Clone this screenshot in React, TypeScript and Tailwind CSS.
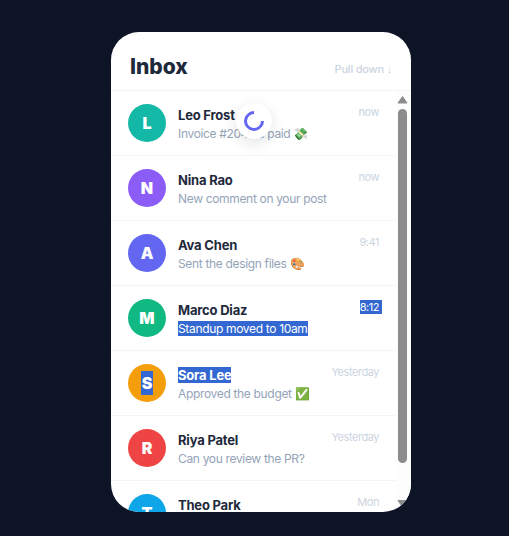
import React from 'react';

const Sel = ({ children, className = '' }: { children: React.ReactNode; className?: string }) => (
  <span className={`bg-[#3367d1] text-white ${className}`}>{children}</span>
);

const rows = [
  { letter: 'L', color: 'bg-[#14b8a6]', name: 'Leo Frost', sub: 'Invoice #2041 is paid 💸', time: 'now' },
  { letter: 'N', color: 'bg-[#8b5cf6]', name: 'Nina Rao', sub: 'New comment on your post', time: 'now' },
  { letter: 'A', color: 'bg-[#6366f1]', name: 'Ava Chen', sub: 'Sent the design files 🎨', time: '9:41' },
  { letter: 'M', color: 'bg-[#10b981]', name: 'Marco Diaz', sub: <Sel>Standup moved to 10am</Sel>, time: <Sel className="pr-[3px] -mr-[3px]">8:12</Sel> },
  { letter: <Sel className="px-[1px]">S</Sel>, color: 'bg-[#f59e0b]', name: <Sel>Sora Lee</Sel>, sub: 'Approved the budget ✅', time: 'Yesterday' },
  { letter: 'R', color: 'bg-[#ef4444]', name: 'Riya Patel', sub: 'Can you review the PR?', time: 'Yesterday' },
  { letter: 'T', color: 'bg-[#0ea5e9]', name: 'Theo Park', sub: 'Lunch on Friday?', time: 'Mon' },
];

export default function App() {
  return (
    <div className="min-h-[536px] bg-[#0c1426] pl-[111px] pt-8 font-['Inter',sans-serif]">
      <div className="relative w-[300px] h-[480px] bg-white rounded-[28px] overflow-hidden flex flex-col">
        <div className="h-[59px] shrink-0 flex items-center justify-between pl-[19px] pr-[19px] pt-3 border-b border-[#f1f5f9]">
          <span className="text-[21px] font-extrabold text-[#1e293b]">Inbox</span>
          <span className="text-[11px] font-medium tracking-[-0.2px] text-[#cbd5e1] mt-1">
            Pull down <span className="font-['Noto_Sans',sans-serif]">↓</span>
          </span>
        </div>
        <div className="flex-1 flex min-h-0">
          <div className="flex-1 min-w-0 overflow-hidden">
            {rows.map((row, i) => (
              <div key={i} className="h-[65px] flex items-center gap-3 pl-[17px] pr-[17px] border-b border-[#f1f5f9]">
                <div className={`w-[38px] h-[38px] shrink-0 rounded-full flex items-center justify-center text-white font-black text-base ${row.color}`}>
                  {row.letter}
                </div>
                <div className="flex-1 min-w-0 pt-[3px]">
                  <div className="text-[13px] font-bold tracking-[-0.2px] text-[#1e293b] leading-[19px]">{row.name}</div>
                  <div className="text-xs tracking-[-0.33px] text-[#94a3b8] leading-[18px] whitespace-nowrap">{row.sub}</div>
                </div>
                <div className="self-start mt-[13px] text-[11px] tracking-[-0.45px] text-[#cbd5e1] leading-[16px]">{row.time}</div>
              </div>
            ))}
          </div>
          <div className="w-[15px] shrink-0 flex flex-col items-center pr-[2px] bg-[#fdfdfd]">
            <svg width="11" height="8" viewBox="0 0 11 8" className="shrink-0 mt-[5px]">
              <path d="M5.5 0.5 L10 7 H1 Z" fill="#8c8c8c" stroke="#8c8c8c" strokeLinejoin="round" />
            </svg>
            <div className="w-[9px] h-[354px] mt-[5px] shrink-0 rounded-full bg-[#8c8c8c]" />
            <svg width="11" height="8" viewBox="0 0 11 8" className="shrink-0 mt-[37px]">
              <path d="M5.5 7 L10 0.5 H1 Z" fill="#8c8c8c" stroke="#8c8c8c" strokeLinejoin="round" />
            </svg>
          </div>
        </div>
        <div className="absolute left-[125px] top-[71px] w-9 h-9 rounded-full bg-white shadow-[0_4px_14px_rgba(15,23,42,0.12)] flex items-center justify-center">
          <div className="w-5 h-5 rounded-full border-[3px] border-[#6366f1] border-t-transparent rotate-45" />
        </div>
      </div>
    </div>
  );
}
